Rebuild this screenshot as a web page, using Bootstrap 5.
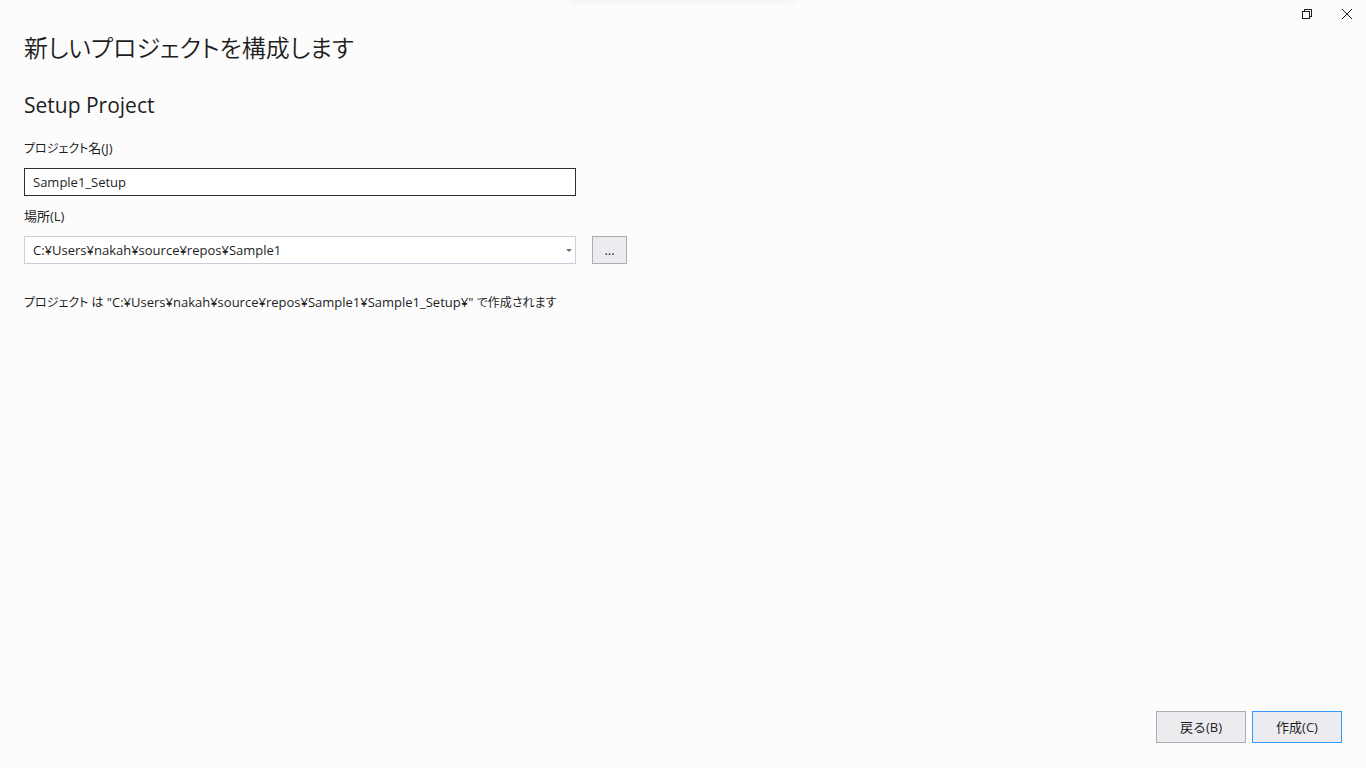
<!DOCTYPE html>
<html lang="ja">
<head>
<meta charset="utf-8">
<meta name="viewport" content="width=device-width, initial-scale=1">
<title>新しいプロジェクトを構成します</title>
<link href="https://cdn.jsdelivr.net/npm/bootstrap@5.3.0/dist/css/bootstrap.min.css" rel="stylesheet">
<style>
  body {
    background: #fcfcfc;
    color: #1e1e1e;
    font-family: "Open Sans", "Noto Sans CJK JP", sans-serif;
    font-size: 13px;
    line-height: 20px;
    font-feature-settings: "palt";
  }
  .dialog-title { font-family: "Noto Sans CJK JP", sans-serif; font-size: 24px; line-height: 38px; font-weight: 350; }
  .template-name { font-size: 21px; line-height: 30px; font-weight: 400; margin-bottom: 18px; }
  .kana { font-size: 12px; line-height: 1; }
  .top-shadow { top: -4px; width: 224px; height: 4px; box-shadow: 0 0 8px rgba(0, 0, 0, .1); }
  .caption-bar { gap: 2px; }
  .caption-btn { width: 38px; height: 28px; color: #1e1e1e; }
  .fields { max-width: 552px; }
  .field-label { display: block; margin-bottom: 10px; }
  .field-row { margin-bottom: 10px; }
  .field { height: 28px; padding: 0 8px; border-radius: 0; border-color: #cccedb; background-color: #fff; color: #1e1e1e; font-size: 13px; line-height: 20px; }
  .field:focus { box-shadow: none; }
  .field-active, .field-active:focus { border-color: #2d2d30; }
  .path-select {
    background-image: url("data:image/svg+xml,%3Csvg xmlns='http://www.w3.org/2000/svg' viewBox='0 0 6 3'%3E%3Cpath fill='%23717171' d='M0 0h6L3 3z'/%3E%3C/svg%3E");
    background-size: 6px 3px;
    background-position: right 3px center;
  }
  .dialog-btn { --bs-btn-bg: #ececf0; --bs-btn-border-color: #acacac; --bs-btn-color: #1e1e1e; --bs-btn-hover-bg: #c9def5; --bs-btn-hover-border-color: #3399ff; border-radius: 0; font-size: 13px; line-height: 20px; }
  .dialog-btn-default { --bs-btn-border-color: #3399ff; }
  .browse-btn { width: 35px; height: 28px; }
  .action-bar { gap: 6px; padding-bottom: 25px; }
  .action-btn { width: 90px; height: 32px; }
</style>
</head>
<body class="d-flex flex-column min-vh-100 position-relative overflow-x-hidden">
  <div class="top-shadow position-absolute start-50 translate-middle-x" aria-hidden="true"></div>

  <header class="caption-bar d-flex justify-content-end">
    <button type="button" class="caption-btn btn p-0 border-0 rounded-0 d-flex align-items-center justify-content-center" aria-label="元に戻す">
      <svg width="10" height="10" viewBox="0 0 10 10" fill="none" stroke="currentColor" shape-rendering="crispEdges"><path d="M.5 2.5h7v7h-7zM2.5 2.5v-2h7v7h-2"/></svg>
    </button>
    <button type="button" class="caption-btn btn p-0 border-0 rounded-0 d-flex align-items-center justify-content-center" aria-label="閉じる">
      <svg width="10" height="10" viewBox="0 0 10 10" fill="none" stroke="currentColor"><path d="M0 0l10 10M10 0L0 10"/></svg>
    </button>
  </header>

  <main class="flex-grow-1 px-4">
    <h1 class="dialog-title mb-0">新しいプロジェクトを構成します</h1>
    <h2 class="template-name mt-4">Setup Project</h2>
    <form>
      <label for="projectName" class="field-label"><span class="kana">プロジェクト</span>名(J)</label>
      <div class="fields field-row"><input id="projectName" type="text" class="form-control field field-active" value="Sample1_Setup"></div>
      <label for="location" class="field-label">場所(L)</label>
      <div class="d-flex gap-3">
        <div class="fields flex-grow-1">
          <select id="location" class="form-select field path-select">
            <option selected>C:¥Users¥nakah¥source¥repos¥Sample1</option>
          </select>
        </div>
        <button type="button" class="btn dialog-btn browse-btn p-0" aria-label="参照">...</button>
      </div>
    </form>
    <p class="mt-4 pt-1 mb-0"><span class="kana">プロジェクト は</span> "C:¥Users¥nakah¥source¥repos¥Sample1¥Sample1_Setup¥" <span class="kana">で作成されます</span></p>
  </main>

  <footer class="action-bar d-flex justify-content-end px-4">
    <button type="button" class="btn dialog-btn action-btn p-0">戻る(B)</button>
    <button type="button" class="btn dialog-btn dialog-btn-default action-btn p-0">作成(C)</button>
  </footer>
<script src="https://cdn.jsdelivr.net/npm/bootstrap@5.3.0/dist/js/bootstrap.bundle.min.js"></script>
</body>
</html>
